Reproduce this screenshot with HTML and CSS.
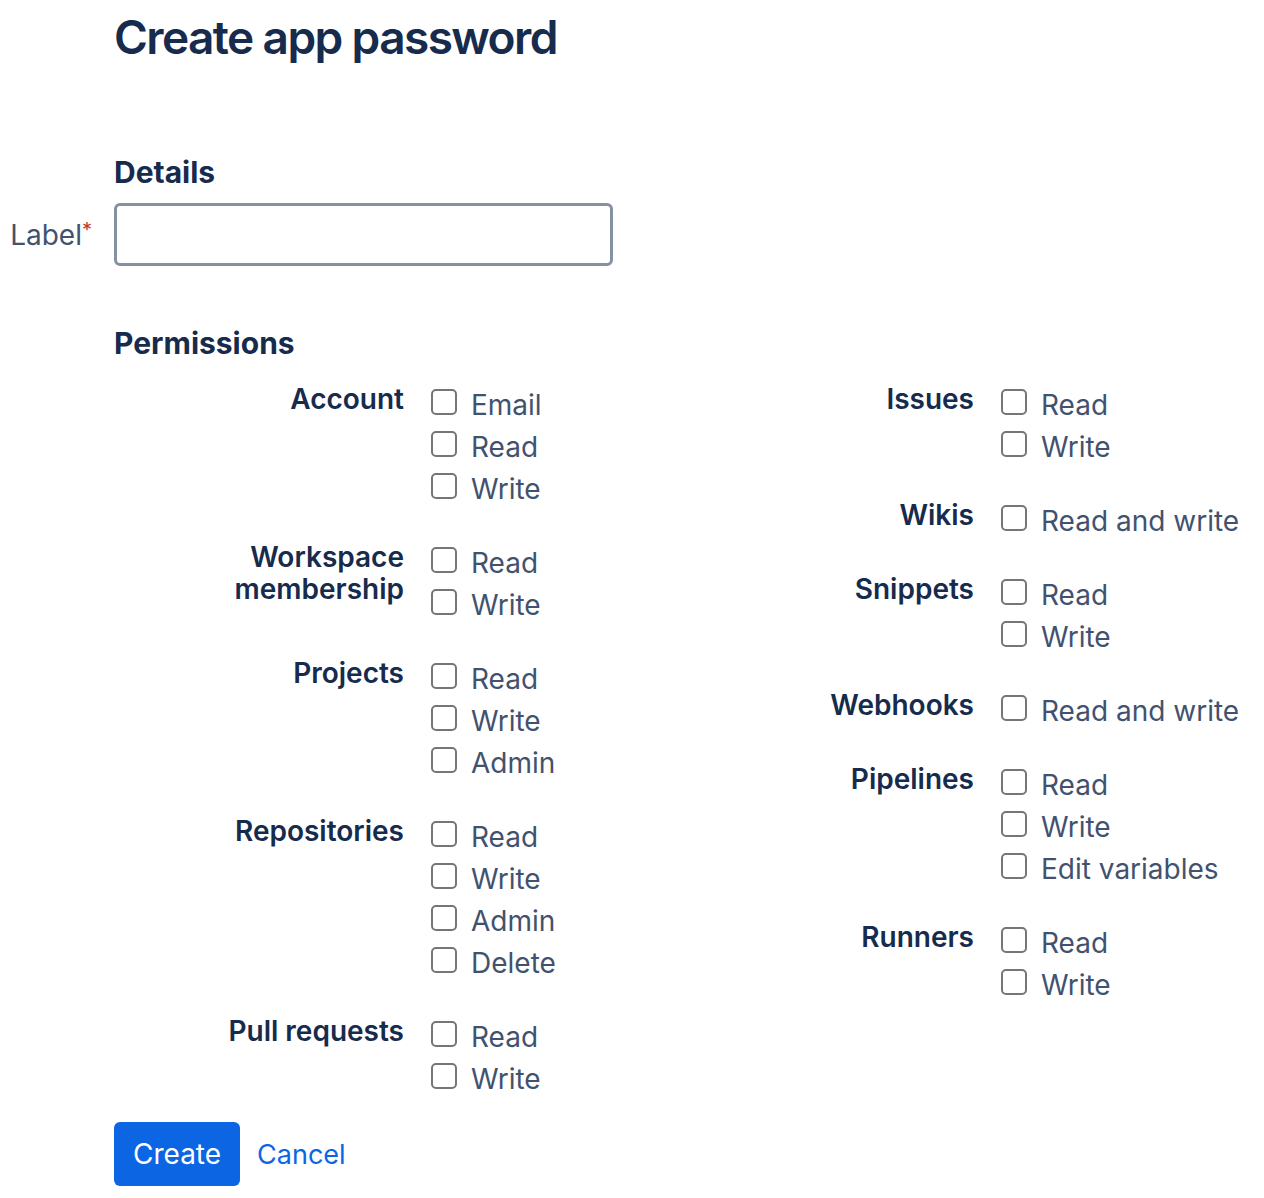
FILE: index.html
```html
<!DOCTYPE html>
<html lang="en">
<head>
    <meta charset="UTF-8">
    <meta name="viewport" content="width=device-width, initial-scale=1.0">
    <title>Create app password</title>
    <link rel="stylesheet" href="styles.css">
</head>
<body>
    <main class="page">
        <h1>Create app password</h1>

        <section class="details">
            <h2>Details</h2>
            <div class="field">
                <label for="label-input">Label<span class="req">*</span></label>
                <input id="label-input" type="text">
            </div>
        </section>

        <section class="permissions">
            <h2>Permissions</h2>
            <div class="perm-cols">
                <div class="perm-col">
                    <div class="group">
                        <div class="group-name">Account</div>
                        <div class="options">
                            <label class="opt"><input type="checkbox"><span>Email</span></label>
                            <label class="opt"><input type="checkbox"><span>Read</span></label>
                            <label class="opt"><input type="checkbox"><span>Write</span></label>
                        </div>
                    </div>
                    <div class="group">
                        <div class="group-name">Workspace membership</div>
                        <div class="options">
                            <label class="opt"><input type="checkbox"><span>Read</span></label>
                            <label class="opt"><input type="checkbox"><span>Write</span></label>
                        </div>
                    </div>
                    <div class="group">
                        <div class="group-name">Projects</div>
                        <div class="options">
                            <label class="opt"><input type="checkbox"><span>Read</span></label>
                            <label class="opt"><input type="checkbox"><span>Write</span></label>
                            <label class="opt"><input type="checkbox"><span>Admin</span></label>
                        </div>
                    </div>
                    <div class="group">
                        <div class="group-name">Repositories</div>
                        <div class="options">
                            <label class="opt"><input type="checkbox"><span>Read</span></label>
                            <label class="opt"><input type="checkbox"><span>Write</span></label>
                            <label class="opt"><input type="checkbox"><span>Admin</span></label>
                            <label class="opt"><input type="checkbox"><span>Delete</span></label>
                        </div>
                    </div>
                    <div class="group">
                        <div class="group-name">Pull requests</div>
                        <div class="options">
                            <label class="opt"><input type="checkbox"><span>Read</span></label>
                            <label class="opt"><input type="checkbox"><span>Write</span></label>
                        </div>
                    </div>
                </div>

                <div class="perm-col">
                    <div class="group">
                        <div class="group-name">Issues</div>
                        <div class="options">
                            <label class="opt"><input type="checkbox"><span>Read</span></label>
                            <label class="opt"><input type="checkbox"><span>Write</span></label>
                        </div>
                    </div>
                    <div class="group">
                        <div class="group-name">Wikis</div>
                        <div class="options">
                            <label class="opt"><input type="checkbox"><span>Read and write</span></label>
                        </div>
                    </div>
                    <div class="group">
                        <div class="group-name">Snippets</div>
                        <div class="options">
                            <label class="opt"><input type="checkbox"><span>Read</span></label>
                            <label class="opt"><input type="checkbox"><span>Write</span></label>
                        </div>
                    </div>
                    <div class="group">
                        <div class="group-name">Webhooks</div>
                        <div class="options">
                            <label class="opt"><input type="checkbox"><span>Read and write</span></label>
                        </div>
                    </div>
                    <div class="group">
                        <div class="group-name">Pipelines</div>
                        <div class="options">
                            <label class="opt"><input type="checkbox"><span>Read</span></label>
                            <label class="opt"><input type="checkbox"><span>Write</span></label>
                            <label class="opt"><input type="checkbox"><span>Edit variables</span></label>
                        </div>
                    </div>
                    <div class="group">
                        <div class="group-name">Runners</div>
                        <div class="options">
                            <label class="opt"><input type="checkbox"><span>Read</span></label>
                            <label class="opt"><input type="checkbox"><span>Write</span></label>
                        </div>
                    </div>
                </div>
            </div>
        </section>

        <div class="actions">
            <button class="btn-primary" type="button">Create</button>
            <a class="btn-link" href="#">Cancel</a>
        </div>
    </main>
</body>
</html>
```

FILE: styles.css
```css
body {
    margin: 0;
    font-family: Inter, "Open Sans", sans-serif;
    color: #172b4d;
    background: #fff;
}
.page {
    padding-left: 114px;
}
h1 {
    margin: 9px 0 0;
    font-size: 46px;
    line-height: 56px;
    font-weight: 600;
    letter-spacing: -1.6px;
}
h2 {
    margin: 0;
    font-size: 30px;
    line-height: 36px;
    font-weight: 700;
}
.details {
    margin-top: 89px;
}
.field {
    display: grid;
    grid-template-columns: 114px 499px;
    align-items: center;
    margin-left: -114px;
    margin-top: 13px;
}
.field label {
    text-align: right;
    padding-right: 22px;
    font-size: 28px;
    color: #42526e;
}
.req {
    color: #c9372c;
    font-size: 20px;
    vertical-align: top;
}
.field input {
    box-sizing: border-box;
    height: 63px;
    border: 3px solid #8590a2;
    border-radius: 6px;
    font-size: 26px;
    padding: 0 14px;
}
.permissions {
    margin-top: 59px;
}
.perm-cols {
    display: grid;
    grid-template-columns: 570px 1fr;
    margin-top: 23px;
}
.group {
    display: grid;
    grid-template-columns: 290px auto;
    column-gap: 27px;
    margin-bottom: 32px;
}
.group:last-child {
    margin-bottom: 0;
}
.group-name {
    margin-top: -1px;
    text-align: right;
    font-size: 28px;
    line-height: 32px;
    font-weight: 600;
}
.options {
    display: flex;
    flex-direction: column;
}
.opt {
    display: flex;
    align-items: flex-start;
    gap: 14px;
    font-size: 28px;
    line-height: 42px;
    color: #42526e;
}
.opt input {
    appearance: none;
    margin: 5px 0 0;
    width: 26px;
    height: 26px;
    border: 2px solid #767676;
    border-radius: 5px;
    background: #fff;
}
.actions {
    display: flex;
    align-items: center;
    gap: 17px;
    margin-top: 22px;
}
.btn-primary {
    height: 64px;
    padding: 0 19px;
    border: none;
    border-radius: 6px;
    background: #0c66e4;
    color: #fff;
    font-family: inherit;
    font-size: 28px;
}
.btn-link {
    color: #0c66e4;
    font-size: 27px;
    text-decoration: none;
}
```
